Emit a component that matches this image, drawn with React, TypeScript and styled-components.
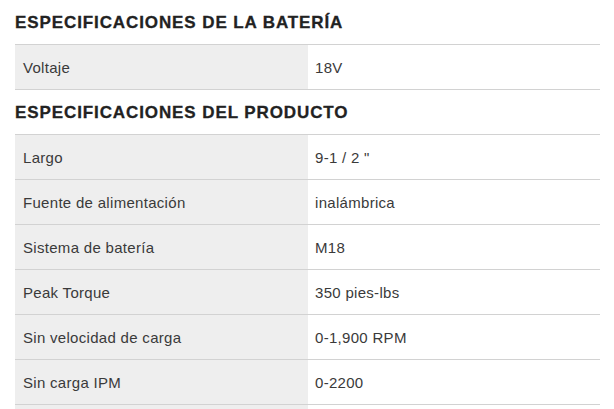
import React from "react";
import styled, { createGlobalStyle } from "styled-components";

const Global = createGlobalStyle`
  html, body { margin: 0; padding: 0; background: #fff; overflow: hidden; }
  body { font-family: "Liberation Sans", Arial, sans-serif; }
`;

const Page = styled.div`
  padding: 0 14px 0 15px;
  display: flex;
  flex-direction: column;
`;

const Heading = styled.h3`
  margin: 0;
  height: 44px;
  display: flex;
  align-items: center;
  padding-top: 1px;
  box-sizing: border-box;
  font-family: "Liberation Sans", Arial, sans-serif;
  font-weight: 700;
  font-size: 17px;
  letter-spacing: 0.9px;
  -webkit-text-stroke: 0.3px #222;
  color: #222;
  text-transform: uppercase;
`;

const Table = styled.div`
  display: grid;
  grid-template-columns: 293px 1fr;
  border-top: 1px solid #d2d2d2;
`;

const Cell = styled.div<{ $label?: boolean }>`
  height: 44px;
  display: flex;
  align-items: center;
  padding-left: ${(p) => (p.$label ? "8px" : "7px")};
  background: ${(p) => (p.$label ? "#eeeeee" : "#ffffff")};
  border-bottom: 1px solid #d2d2d2;
  font-size: 15px;
  letter-spacing: 0.3px;
  color: #3a3a3a;
`;

type Spec = [string, string];

const battery: Spec[] = [["Voltaje", "18V"]];
const product: Spec[] = [
  ["Largo", "9-1 / 2 \""],
  ["Fuente de alimentación", "inalámbrica"],
  ["Sistema de batería", "M18"],
  ["Peak Torque", "350 pies-lbs"],
  ["Sin velocidad de carga", "0-1,900 RPM"],
  ["Sin carga IPM", "0-2200"],
  ["", ""],
];

const SpecTable = ({ rows }: { rows: Spec[] }) => (
  <Table>
    {rows.map(([k, v], i) => (
      <React.Fragment key={i}>
        <Cell $label>{k}</Cell>
        <Cell>{v}</Cell>
      </React.Fragment>
    ))}
  </Table>
);

export default function App() {
  return (
    <>
      <Global />
      <Page>
        <Heading>Especificaciones de la batería</Heading>
        <SpecTable rows={battery} />
        <Heading>Especificaciones del producto</Heading>
        <SpecTable rows={product} />
      </Page>
    </>
  );
}
